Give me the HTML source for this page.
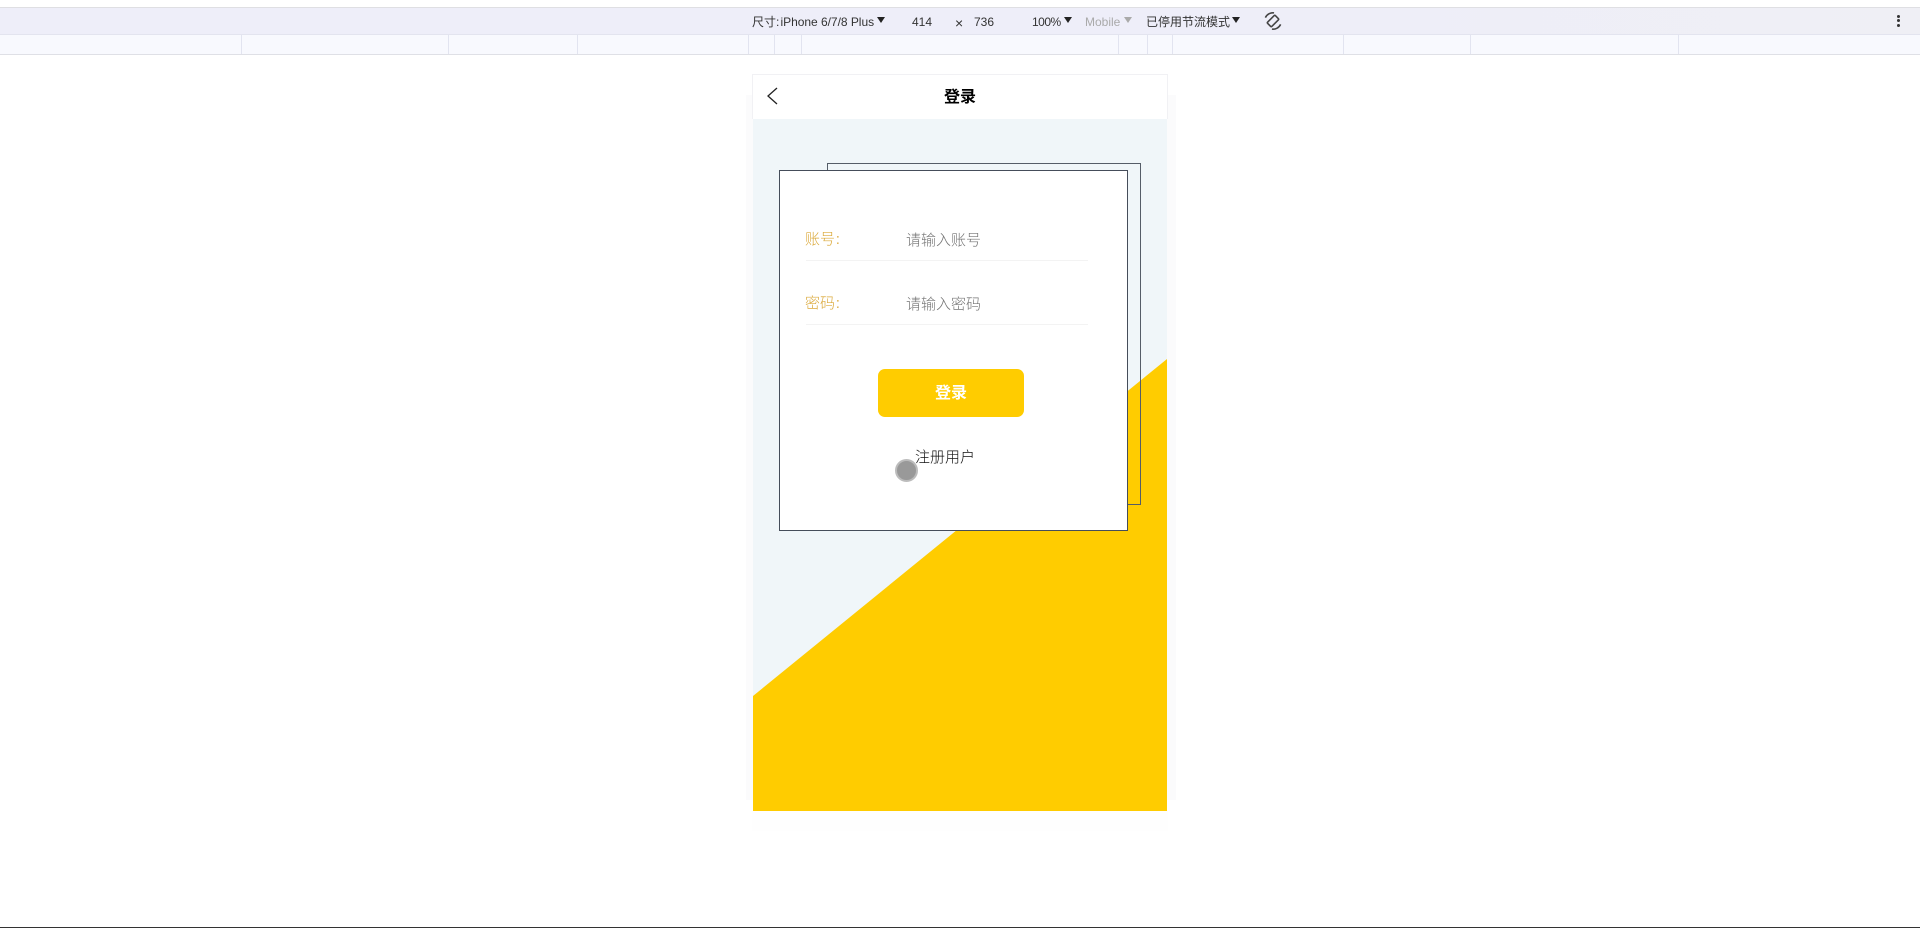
<!DOCTYPE html>
<html lang="zh">
<head>
<meta charset="utf-8">
<title>登录</title>
<style>
html,body{margin:0;padding:0;width:1920px;height:928px;overflow:hidden;background:#fff}
body{position:relative;font-family:"Liberation Sans","Noto Sans CJK SC",sans-serif}
.a{position:absolute}
.t{position:absolute;white-space:nowrap;line-height:20px;height:20px}
.tb{font-size:12px;color:#333;top:12px}
.tick{position:absolute;top:35px;width:1px;height:19px;background:#e2e4f0}
.tri{position:absolute;width:0;height:0;border-left:4px solid transparent;border-right:4px solid transparent;border-top:6px solid #222;top:17px}
.cjk{font-family:"Noto Sans CJK SC","Liberation Sans",sans-serif}
.lt{font-weight:300}
</style>
</head>
<body>
<!-- devtools bars -->
<div class="a" style="left:0;top:7px;width:1920px;height:1px;background:#dfdfe3"></div>
<div class="a" style="left:0;top:8px;width:1920px;height:26px;background:linear-gradient(90deg,#eeeef9 0,#eeeef9 60%,#efeff5 100%)"></div>
<div class="a" style="left:0;top:34px;width:1920px;height:1px;background:#e3e4ef"></div>
<div class="a" style="left:0;top:35px;width:1920px;height:19px;background:#f8f9fe"></div>
<div class="a" style="left:0;top:54px;width:1920px;height:1px;background:#dfe0e6"></div>
<div class="tick" style="left:241px"></div>
<div class="tick" style="left:448px"></div>
<div class="tick" style="left:577px"></div>
<div class="tick" style="left:748px"></div>
<div class="tick" style="left:774px"></div>
<div class="tick" style="left:801px"></div>
<div class="tick" style="left:1118px"></div>
<div class="tick" style="left:1147px"></div>
<div class="tick" style="left:1172px"></div>
<div class="tick" style="left:1343px"></div>
<div class="tick" style="left:1470px"></div>
<div class="tick" style="left:1678px"></div>

<span class="t tb" style="left:752px">尺寸:</span>
<span class="t tb" style="left:780.5px;letter-spacing:-.03px">iPhone 6/7/8 Plus</span>
<div class="tri" style="left:877px"></div>
<span class="t tb" style="left:912px">414</span>
<span class="t tb" style="left:955px;top:13px;font-size:14px">×</span>
<span class="t tb" style="left:974px">736</span>
<span class="t tb" style="left:1032px;letter-spacing:-.5px">100%</span>
<div class="tri" style="left:1064px"></div>
<span class="t tb" style="left:1085px;color:#aaa">Mobile</span>
<div class="tri" style="left:1124px;border-top-color:#aaa"></div>
<span class="t tb" style="left:1146px">已停用节流模式</span>
<div class="tri" style="left:1232px"></div>
<svg class="a" style="left:1262px;top:10px" width="22" height="22" viewBox="0 0 22 22" fill="none" stroke="#444">
  <g transform="rotate(45 11 11)">
    <rect x="8" y="5.5" width="6" height="11" rx="1" stroke-width="1.6"/>
    <path d="M3.2 14 A8.5 8.5 0 0 1 6 4.5" stroke-width="1.6"/>
    <path d="M18.8 8 A8.5 8.5 0 0 1 16 17.5" stroke-width="1.6"/>
  </g>
</svg>
<div class="a" style="left:1897px;top:15px;width:3px;height:3px;border-radius:50%;background:#333"></div>
<div class="a" style="left:1897px;top:19px;width:3px;height:3px;border-radius:50%;background:#333"></div>
<div class="a" style="left:1897px;top:24px;width:3px;height:3px;border-radius:50%;background:#333"></div>

<!-- faint device shadow -->
<div class="a" style="left:746px;top:95px;width:430px;height:705px;background:#fbfbfc"></div>
<div class="a" style="left:752px;top:811px;width:416px;height:20px;background:#fefefe"></div>

<!-- phone -->
<div class="a" style="left:753px;top:74px;width:414px;height:737px;background:#f0f6f9;overflow:hidden">
  <svg class="a" style="left:0;top:0" width="414" height="737">
    <polygon points="414,285 414,737 0,737 0,622" fill="#ffcc00"/>
  </svg>
  <div class="a" style="left:0;top:0;width:414px;height:45px;background:#fff"></div>
</div>
<div class="a" style="left:752px;top:74px;width:416px;height:45px;border:1px solid #f1f1f4;border-bottom:0;box-sizing:border-box"></div>

<svg class="a" style="left:760px;top:82px" width="24" height="28" fill="none" stroke="#222" stroke-width="1.3">
  <path d="M17 6 L8 14 L17 22"/>
</svg>
<span class="t cjk" style="left:944px;top:85px;font-size:16px;font-weight:700;color:#000">登录</span>

<!-- cards -->
<div class="a" style="left:827px;top:163px;width:314px;height:342px;box-sizing:border-box;border:1px solid #555d68"></div>
<div class="a" style="left:779px;top:170px;width:348.5px;height:361px;box-sizing:border-box;border:1px solid #454d5a;background:#fff"></div>

<span class="t cjk lt" style="left:805px;top:229px;font-size:15px;color:#dba93a">账号</span>
<span class="t cjk lt" style="left:836px;top:229px;font-size:15px;color:#dba93a">:</span>
<span class="t cjk lt" style="left:906px;top:230px;font-size:15px;color:#747474">请输入账号</span>
<div class="a" style="left:806px;top:260px;width:282px;height:1px;background:#f3f3f3"></div>
<span class="t cjk lt" style="left:805px;top:293px;font-size:15px;color:#dba93a">密码</span>
<span class="t cjk lt" style="left:836px;top:293px;font-size:15px;color:#dba93a">:</span>
<span class="t cjk lt" style="left:906px;top:294px;font-size:15px;color:#747474">请输入密码</span>
<div class="a" style="left:806px;top:324px;width:282px;height:1px;background:#f3f3f3"></div>

<div class="a" style="left:878px;top:369px;width:146px;height:48px;border-radius:7px;background:#ffcc00"></div>
<span class="t cjk" style="left:935px;top:381px;font-size:16px;font-weight:700;color:#fff">登录</span>
<span class="t cjk lt" style="left:915px;top:447px;font-size:15px;color:#111">注册用户</span>

<div class="a" style="left:895px;top:459px;width:23px;height:23px;box-sizing:border-box;border-radius:50%;background:#999;border:2px solid #bcbcbc"></div>

<!-- bottom strip -->
<div class="a" style="left:0;top:927px;width:1920px;height:1px;background:#333"></div>
</body>
</html>
